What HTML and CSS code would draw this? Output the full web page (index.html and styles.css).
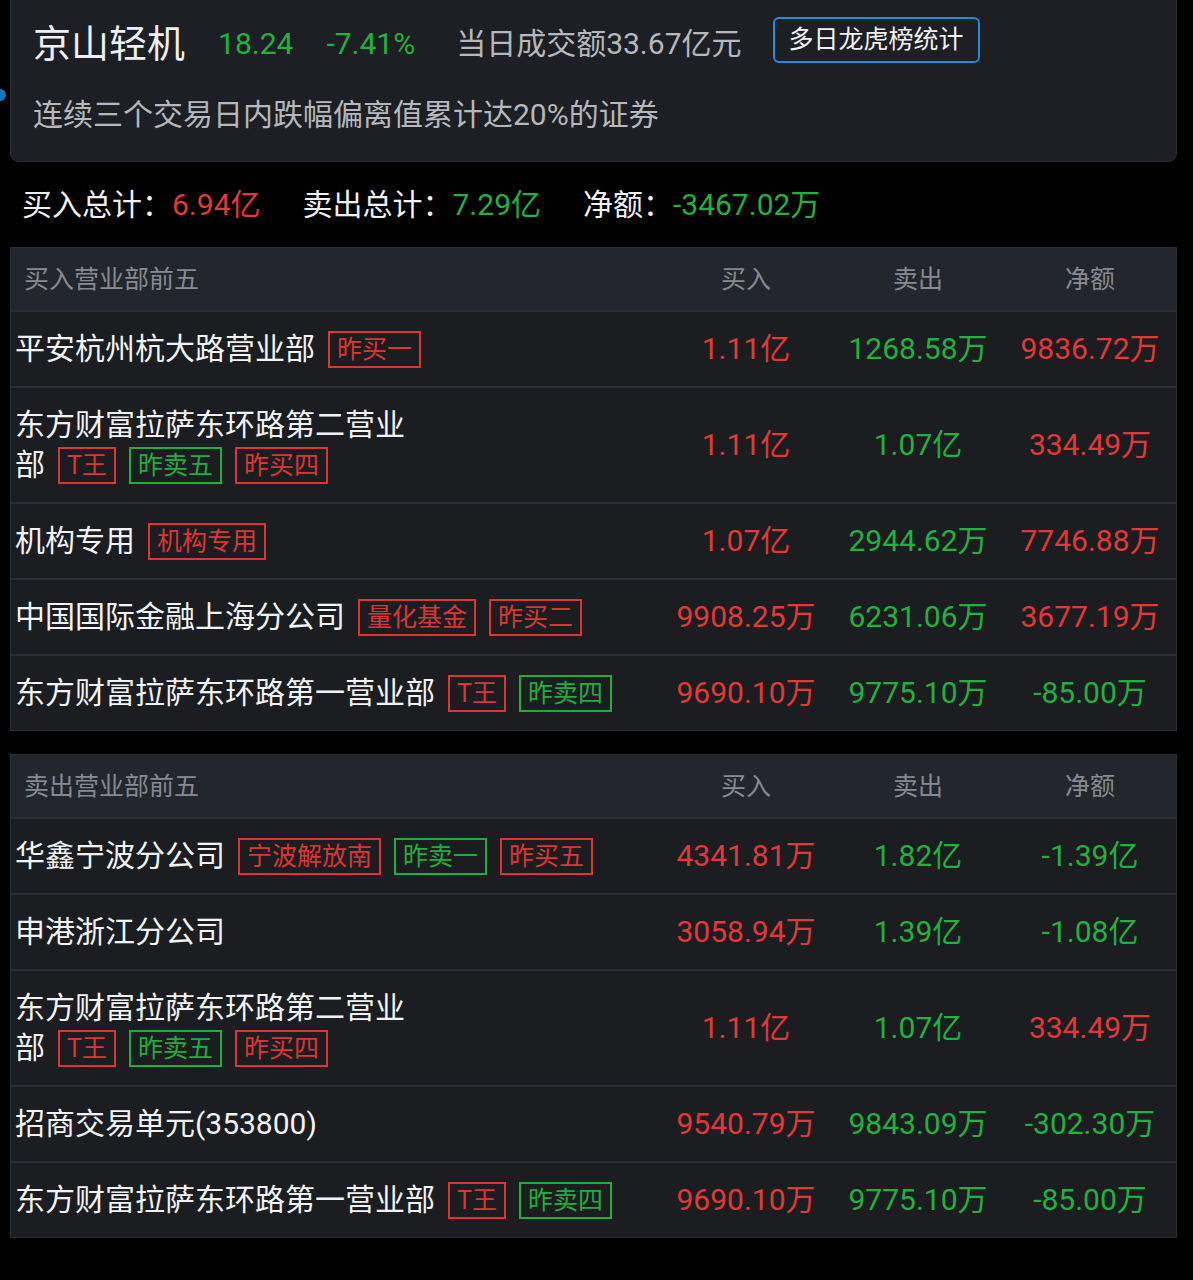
FILE: index.html
```html
<!DOCTYPE html>
<html lang="zh-CN">
<head>
<meta charset="utf-8">
<title>京山轻机 龙虎榜</title>
<link rel="stylesheet" href="styles.css">
</head>
<body>
<div class="page">
  <span class="edge-dot"></span>
  <section class="card">
    <div class="title-row">
      <span class="stock">京山轻机</span>
      <span class="down">18.24</span>
      <span class="down">-7.41%</span>
      <span class="turnover">当日成交额33.67亿元</span>
      <button class="btn">多日龙虎榜统计</button>
    </div>
    <div class="reason">连续三个交易日内跌幅偏离值累计达20%的证券</div>
  </section>

  <div class="totals">
    <span class="lbl">买入总计：</span><span class="up">6.94亿</span>
    <span class="lbl">卖出总计：</span><span class="down">7.29亿</span>
    <span class="lbl">净额：</span><span class="down">-3467.02万</span>
  </div>

  <section class="table">
    <div class="row head">
      <div class="name">买入营业部前五</div><div class="num">买入</div><div class="num">卖出</div><div class="num">净额</div>
    </div>
    <div class="row">
      <div class="name">平安杭州杭大路营业部<span class="tag r">昨买一</span></div>
      <div class="num up">1.11亿</div><div class="num down">1268.58万</div><div class="num up">9836.72万</div>
    </div>
    <div class="row">
      <div class="name">东方财富拉萨东环路第二营业<span class="keep">部<span class="tag r">T王</span><span class="tag g">昨卖五</span><span class="tag r">昨买四</span></span></div>
      <div class="num up">1.11亿</div><div class="num down">1.07亿</div><div class="num up">334.49万</div>
    </div>
    <div class="row">
      <div class="name">机构专用<span class="tag r">机构专用</span></div>
      <div class="num up">1.07亿</div><div class="num down">2944.62万</div><div class="num up">7746.88万</div>
    </div>
    <div class="row">
      <div class="name">中国国际金融上海分公司<span class="tag r">量化基金</span><span class="tag r">昨买二</span></div>
      <div class="num up">9908.25万</div><div class="num down">6231.06万</div><div class="num up">3677.19万</div>
    </div>
    <div class="row">
      <div class="name">东方财富拉萨东环路第一营业部<span class="tag r">T王</span><span class="tag g">昨卖四</span></div>
      <div class="num up">9690.10万</div><div class="num down">9775.10万</div><div class="num down">-85.00万</div>
    </div>
  </section>

  <section class="table second">
    <div class="row head">
      <div class="name">卖出营业部前五</div><div class="num">买入</div><div class="num">卖出</div><div class="num">净额</div>
    </div>
    <div class="row">
      <div class="name">华鑫宁波分公司<span class="tag r">宁波解放南</span><span class="tag g">昨卖一</span><span class="tag r">昨买五</span></div>
      <div class="num up">4341.81万</div><div class="num down">1.82亿</div><div class="num down">-1.39亿</div>
    </div>
    <div class="row">
      <div class="name">申港浙江分公司</div>
      <div class="num up">3058.94万</div><div class="num down">1.39亿</div><div class="num down">-1.08亿</div>
    </div>
    <div class="row">
      <div class="name">东方财富拉萨东环路第二营业<span class="keep">部<span class="tag r">T王</span><span class="tag g">昨卖五</span><span class="tag r">昨买四</span></span></div>
      <div class="num up">1.11亿</div><div class="num down">1.07亿</div><div class="num up">334.49万</div>
    </div>
    <div class="row">
      <div class="name">招商交易单元(353800)</div>
      <div class="num up">9540.79万</div><div class="num down">9843.09万</div><div class="num down">-302.30万</div>
    </div>
    <div class="row">
      <div class="name">东方财富拉萨东环路第一营业部<span class="tag r">T王</span><span class="tag g">昨卖四</span></div>
      <div class="num up">9690.10万</div><div class="num down">9775.10万</div><div class="num down">-85.00万</div>
    </div>
  </section>
</div>
</body>
</html>
```
FILE: styles.css
```css
* { box-sizing: border-box; }
html, body {
  margin: 0;
  background: #000;
}
body {
  font-family: Roboto, "Noto Sans CJK SC", sans-serif;
  color: #eceef0;
  font-size: 30px;
}
.page {
  position: relative;
  padding: 0 16px 0 10px;
  height: 1280px;
  overflow: hidden;
}
.edge-dot {
  position: absolute;
  left: -6px;
  top: 89px;
  width: 12px;
  height: 12px;
  border-radius: 50%;
  background: #1976b8;
}
.up { color: #e1383a; }
.down { color: #20b140; }

/* top card */
.card {
  background: #1d1f24;
  border: 1px solid #2c2f35;
  border-top: none;
  border-radius: 0 0 9px 9px;
  padding: 17px 22px 26px;
  height: 162px;
}
.title-row {
  display: flex;
  align-items: center;
  gap: 33px;
  height: 46px;
  line-height: 46px;
}
.title-row > span { margin-top: 8px; }
.title-row .turnover { margin-left: 8px; }
.stock {
  font-size: 38px;
  color: #eef0f2;
}
.turnover { color: #b6b8bb; }
.btn {
  margin-left: -2px;
  height: 46px;
  padding: 0 14px;
  border: 2px solid #1d8fd6;
  border-radius: 6px;
  background: #1d1f24;
  color: #f2f2f2;
  font-family: Roboto, "Noto Sans CJK SC", sans-serif;
  font-size: 25px;
  line-height: 40px;
}
.reason {
  margin-top: 32px;
  line-height: 40px;
  color: #b6b8bb;
}

/* totals */
.totals {
  height: 85px;
  padding: 20px 0 0 12px;
  line-height: 45px;
  display: flex;
}
.totals .lbl { color: #eef0f2; }
.totals .lbl + span { margin-right: 42px; }

/* tables */
.table {
  border: 1px solid #2a2d33;
  background: #1b1d21;
}
.table.second { margin-top: 23px; }
.row {
  display: grid;
  grid-template-columns: 1fr 172px 172px 172px;
  align-items: center;
  padding: 17px 0;
  border-top: 2px solid #2a2d33;
  line-height: 40px;
}
.row.head {
  border-top: none;
  background: #23262c;
  padding: 11px 0 10px;
  height: 62px;
  font-size: 25px;
  color: #868a91;
}
.row.head .name { padding-left: 13px; color: #868a91; }
.name {
  padding-left: 4px;
  padding-right: 6px;
  color: #f2f3f5;
}
.num {
  text-align: center;
  white-space: nowrap;
}
.keep { white-space: nowrap; }
.tag {
  display: inline-block;
  vertical-align: middle;
  margin-left: 13px;
  margin-top: -3px;
  height: 37px;
  padding: 0 7px;
  border: 2px solid currentColor;
  font-size: 25px;
  line-height: 33px;
}
.tag.r { color: #dd3535; }
.tag.g { color: #1fae3c; }
```
